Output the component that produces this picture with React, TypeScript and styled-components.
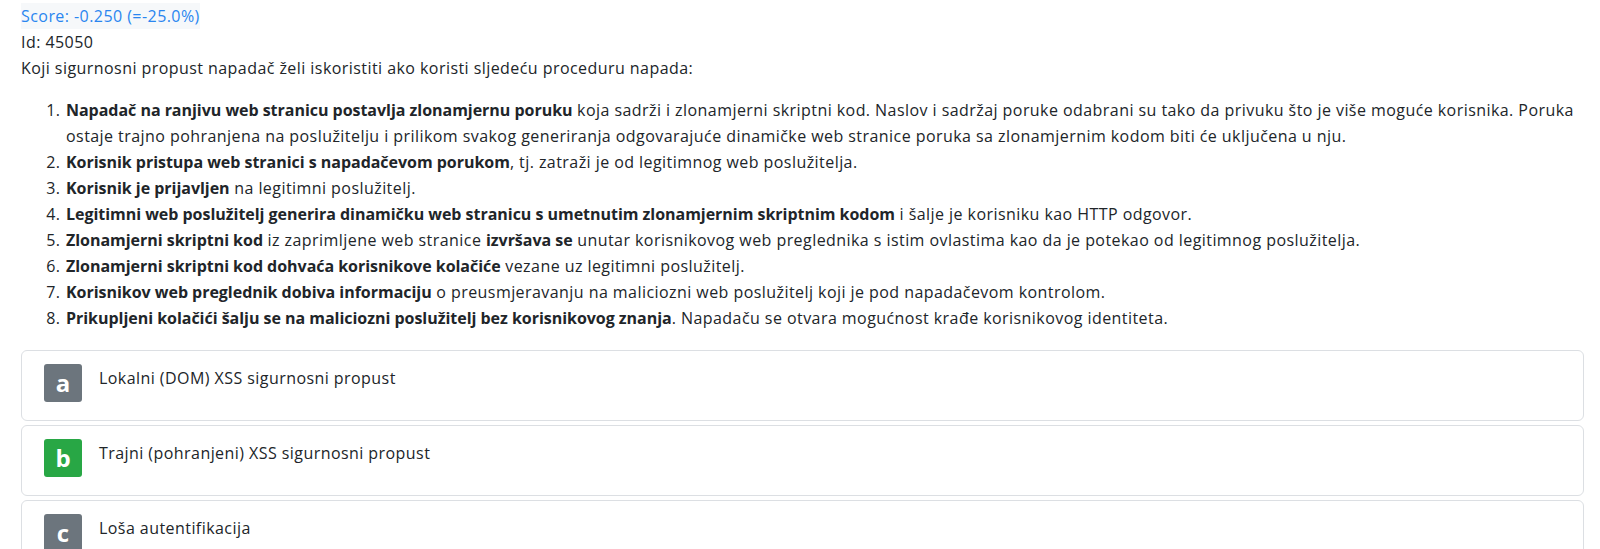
import React from 'react';
import { createGlobalStyle, styled } from 'styled-components';

const GlobalStyle = createGlobalStyle`
  body {
    margin: 0;
    background: #fff;
    color: #212529;
    font-family: "Open Sans", "Liberation Sans", sans-serif;
    font-size: 16px;
    line-height: 26px;
    letter-spacing: 0.44px;
  }
`;

const Page = styled.div`
  padding: 3px 16px 0 21px;
`;

const Score = styled.div`
  display: inline-block;
  color: #2a86f0;
  background: #f6f8fa;
`;

const Line = styled.div``;

const Steps = styled.ol`
  margin: 16px 0 19px;
  padding-left: 44px;
`;

const Step = styled.li`
  padding-left: 1px;
  b {
    font-weight: 700;
    letter-spacing: -0.03px;
  }
`;

const Answer = styled.div`
  display: flex;
  align-items: flex-start;
  gap: 17px;
  padding: 13px 22px 18px;
  margin-bottom: 4px;
  border: 1px solid #dcdfe3;
  border-radius: 6px;
`;

const Badge = styled.div<{ $correct?: boolean }>`
  flex: none;
  width: 38px;
  height: 38px;
  border-radius: 3px;
  background: ${(p) => (p.$correct ? '#28a745' : '#6c757d')};
  color: #fff;
  font-size: 24px;
  font-weight: 700;
  line-height: 38px;
  letter-spacing: 0;
  text-align: center;
`;

const AnswerText = styled.div`
  padding-top: 2px;
  line-height: 24px;
`;

const answers = [
  { key: 'a', text: 'Lokalni (DOM) XSS sigurnosni propust', correct: false },
  { key: 'b', text: 'Trajni (pohranjeni) XSS sigurnosni propust', correct: true },
  { key: 'c', text: 'Loša autentifikacija', correct: false },
];

export default function App(): React.ReactElement {
  return (
    <Page>
      <GlobalStyle />
      <Score>Score: -0.250 (=-25.0%)</Score>
      <Line>Id: 45050</Line>
      <Line>Koji sigurnosni propust napadač želi iskoristiti ako koristi sljedeću proceduru napada:</Line>
      <Steps>
        <Step>
          <b>Napadač na ranjivu web stranicu postavlja zlonamjernu poruku</b> koja sadrži i zlonamjerni skriptni kod. Naslov i sadržaj poruke odabrani su tako da privuku što je više moguće korisnika. Poruka ostaje trajno pohranjena na poslužitelju i prilikom svakog generiranja odgovarajuće dinamičke web stranice poruka sa zlonamjernim kodom biti će uključena u nju.
        </Step>
        <Step>
          <b>Korisnik pristupa web stranici s napadačevom porukom</b>, tj. zatraži je od legitimnog web poslužitelja.
        </Step>
        <Step>
          <b>Korisnik je prijavljen</b> na legitimni poslužitelj.
        </Step>
        <Step>
          <b>Legitimni web poslužitelj generira dinamičku web stranicu s umetnutim zlonamjernim skriptnim kodom</b> i šalje je korisniku kao HTTP odgovor.
        </Step>
        <Step>
          <b>Zlonamjerni skriptni kod</b> iz zaprimljene web stranice <b>izvršava se</b> unutar korisnikovog web preglednika s istim ovlastima kao da je potekao od legitimnog poslužitelja.
        </Step>
        <Step>
          <b>Zlonamjerni skriptni kod dohvaća korisnikove kolačiće</b> vezane uz legitimni poslužitelj.
        </Step>
        <Step>
          <b>Korisnikov web preglednik dobiva informaciju</b> o preusmjeravanju na maliciozni web poslužitelj koji je pod napadačevom kontrolom.
        </Step>
        <Step>
          <b>Prikupljeni kolačići šalju se na maliciozni poslužitelj bez korisnikovog znanja</b>. Napadaču se otvara mogućnost krađe korisnikovog identiteta.
        </Step>
      </Steps>
      {answers.map((a) => (
        <Answer key={a.key}>
          <Badge $correct={a.correct}>{a.key}</Badge>
          <AnswerText>{a.text}</AnswerText>
        </Answer>
      ))}
    </Page>
  );
}
